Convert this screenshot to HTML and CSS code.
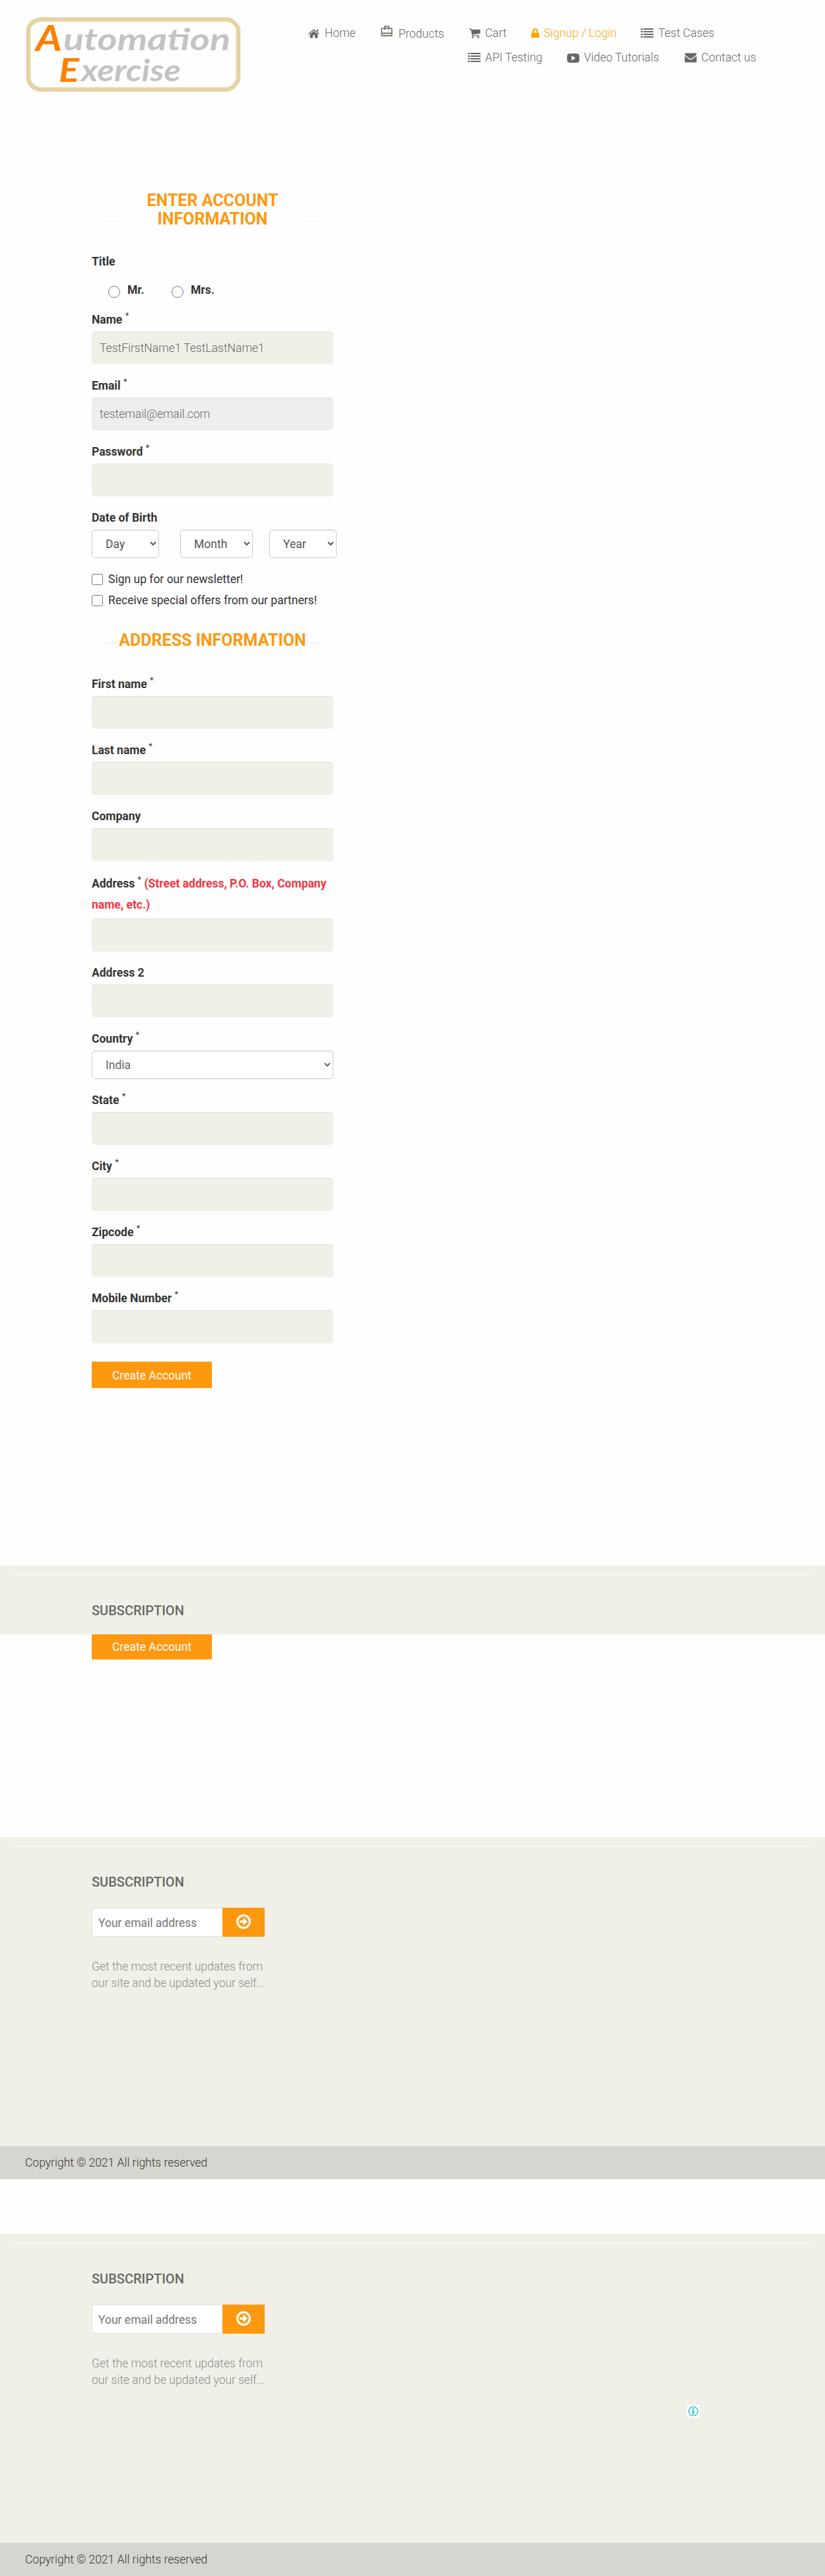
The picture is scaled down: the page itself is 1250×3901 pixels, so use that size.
FILE: index.html
```html
<!DOCTYPE html>
<html lang="en">
<head>
<meta charset="utf-8">
<title>Automation Exercise - Signup</title>
<link rel="stylesheet" href="styles.css">
</head>
<body>
<svg width="0" height="0" class="sprite">
  <symbol id="list" viewBox="0 0 19 14"><path d="M0 0h3v2H0zM4 0h15v2H4zM0 4h3v2H0zM4 4h15v2H4zM0 8h3v2H0zM4 8h15v2H4zM0 12h3v2H0zM4 12h15v2H4z"/></symbol>
  <symbol id="arrow" viewBox="0 0 24 24"><path fill-rule="evenodd" d="M12 0a12 12 0 1 0 0 24a12 12 0 0 0 0-24zm0 3.500a8.500 8.500 0 1 1 0 17a8.500 8.500 0 0 1 0-17z"/><path d="M5.800 10.200h5.600V6.900q.9-1.300 2-.2L18.400 12l-5 5.300q-1.100 1.100-2-.2v-3.300H5.800z"/></symbol>
</svg>

<header class="header">
  <svg class="logo" width="328" height="116" viewBox="0 0 328 116" role="img" aria-label="Automation Exercise">
    <path class="logo-frame" d="M22 3.500H307Q316 4 323 17V95Q316 108 307 109.500H22Q9 107 5 95V17Q9 6 22 3.500Z"/>
    <text class="logo-cap" x="16" y="51" font-size="54" textLength="40" lengthAdjust="spacingAndGlyphs">A</text>
    <text class="logo-word" x="58" y="50" font-size="45" textLength="253" lengthAdjust="spacingAndGlyphs">utomation</text>
    <text class="logo-cap" x="51" y="98" font-size="50" textLength="31" lengthAdjust="spacingAndGlyphs">E</text>
    <text class="logo-word" x="85" y="97" font-size="45" textLength="151" lengthAdjust="spacingAndGlyphs">xercise</text>
  </svg>
  <nav class="nav">
    <div class="nav-row">
      <a class="home"><svg width="17" height="14" viewBox="0 0 17 14"><path d="M8.500 0L17 7.300l-1 1L8.500 1.900L1 8.300l-1-1zM13 .7h2v4l-2-1.800zM2.600 8.100L8.500 3.200l5.900 4.900V13.500H10V9.300H7v4.200H2.600z"/></svg>Home</a>
      <a class="products"><svg width="18" height="17" viewBox="0 0 18 17"><path fill-rule="evenodd" d="M5 3V1.500Q5 0 6.300 0h5Q13 0 13 1.500V3h3q1.500 0 1.500 1.500v10q0 1.500-1.500 1.500H2Q.5 16 .5 14.500v-10Q.5 3 2 3zm1.600 0h4.800V1.500H6.600zM2 4.600v5.900h14V4.600h-3v1.700h-1.600V4.600H6.600v1.700H5V4.600zM2 12.300v2h14v-2z"/></svg>Products</a>
      <a class="cart"><svg width="17" height="15" viewBox="0 0 17 15"><path d="M0 .5h2.600q1 0 1.200 1.200H16.500v6L5 9.200l.2 1.100H15v1.300H4.500L2.400 2H0z"/><circle cx="5.200" cy="13.400" r="1.400"/><circle cx="13.700" cy="13.400" r="1.400"/></svg>Cart</a>
      <a class="signup"><svg width="12" height="15" viewBox="0 0 12 15"><path fill-rule="evenodd" d="M1.800 6.500V4.200a4.200 4.200 0 0 1 8.400 0v2.300H11q1 0 1 1v5.800q0 1-1 1H1q-1 0-1-1V7.500q0-1 1-1zM4 6.500h4V4.200a2 2 0 0 0-4 0z"/></svg>Signup / Login</a>
      <a class="cases"><svg class="list" width="19" height="14"><use href="#list"/></svg>Test Cases</a>
    </div>
    <div class="nav-row second">
      <a class="api"><svg class="list" width="19" height="14"><use href="#list"/></svg>API Testing</a>
      <a class="video"><svg width="19" height="14" viewBox="0 0 19 14"><path fill-rule="evenodd" d="M3 .3Q9.500-.2 16 .3q2.300.2 2.600 2.500.5 4.200 0 8.400-.3 2.300-2.600 2.500-6.500.5-13 0Q.7 13.500.4 11.200q-.5-4.200 0-8.400Q.7.500 3 .3zM6.900 3.200v7.600L13.200 7z"/></svg>Video Tutorials</a>
      <a class="contact"><svg width="19" height="15" viewBox="0 0 19 15"><path d="M1.500.5h16q1 0 1 1.200Q18 3.800 11.500 8.200q-2 1.400-4 0Q1 3.800.5 1.700.5.500 1.500.5zM.5 4.500Q3 7 7 9.600q2.500 1.700 5 0Q16 7 18.500 4.500v8.700q0 1.300-1.300 1.300H1.800Q.5 14.500.5 13.200z"/></svg>Contact us</a>
    </div>
  </nav>
</header>

<main class="form">
  <h2 class="title two-line">Enter Account Information</h2>
  <div class="label title-label">Title</div>
  <div class="radios">
    <label class="radio"><input type="radio" name="t">Mr.</label>
    <label class="radio"><input type="radio" name="t">Mrs.</label>
  </div>
  <div class="group"><label class="label">Name <sup>*</sup></label><input class="field" value="TestFirstName1 TestLastName1"></div>
  <div class="group"><label class="label">Email <sup>*</sup></label><input class="field off" value="testemail@email.com" disabled></div>
  <div class="group"><label class="label">Password <sup>*</sup></label><input class="field" type="password"></div>
  <div class="group"><label class="label">Date of Birth</label>
    <div class="dates">
      <select class="select"><option>Day</option></select>
      <select class="select month"><option>Month</option></select>
      <select class="select"><option>Year</option></select>
    </div>
  </div>
  <label class="check"><input type="checkbox">Sign up for our newsletter!</label>
  <label class="check"><input type="checkbox">Receive special offers from our partners!</label>
  <h2 class="title address">Address Information</h2>
  <div class="group"><label class="label">First name <sup>*</sup></label><input class="field"></div>
  <div class="group"><label class="label">Last name <sup>*</sup></label><input class="field"></div>
  <div class="group"><label class="label">Company</label><input class="field"></div>
  <div class="group"><label class="label tall">Address <sup>*</sup> <span class="hint">(Street address, P.O. Box, Company name, etc.)</span></label><input class="field"></div>
  <div class="group"><label class="label">Address 2</label><input class="field"></div>
  <div class="group"><label class="label">Country <sup>*</sup></label><select class="select wide"><option>India</option></select></div>
  <div class="group"><label class="label">State <sup>*</sup></label><input class="field"></div>
  <div class="group"><label class="label">City <sup>*</sup></label><input class="field"></div>
  <div class="group"><label class="label">Zipcode <sup>*</sup></label><input class="field"></div>
  <div class="group"><label class="label">Mobile Number <sup>*</sup></label><input class="field"></div>
  <button class="create">Create Account</button>
</main>

<section class="footer short">
  <h3 class="sub">Subscription</h3>
</section>
<div class="repeat"><button class="create cut">Create Account</button></div>

<footer>
  <section class="footer">
    <h3 class="sub">Subscription</h3>
    <form class="subscribe"><input placeholder="Your email address"><button type="button"><svg width="22" height="22"><use href="#arrow"/></svg></button></form>
    <p class="note">Get the most recent updates from<br>our site and be updated your self...</p>
  </section>
  <div class="copyright">Copyright © 2021 All rights reserved</div>
</footer>

<footer class="last">
  <section class="footer">
    <h3 class="sub">Subscription</h3>
    <form class="subscribe"><input placeholder="Your email address"><button type="button"><svg width="22" height="22"><use href="#arrow"/></svg></button></form>
    <p class="note">Get the most recent updates from<br>our site and be updated your self...</p>
    <svg class="adinfo" width="19" height="19" viewBox="0 0 19 19"><rect width="19" height="19" fill="#fff"/><circle cx="9.500" cy="9.500" r="6.900" fill="none" stroke="#1bb5d3" stroke-width="1.300"/><path fill="#1bb5d3" d="M8.300 4.800h2.400v2H8.300zM8 8h2.700v6H8.300V9H8z"/></svg>
  </section>
  <div class="copyright">Copyright © 2021 All rights reserved</div>
</footer>
</body>
</html>
```
FILE: styles.css
```css
* { box-sizing: border-box; }
body { margin: 0; background: #fefefe; font: 300 17.5px/25px Roboto, sans-serif; color: #696763; }
.sprite { display: none; }
input, select, button { font-family: inherit; font-size: 17.5px; margin: 0; }

.header { display: flex; height: 166px; margin: 0 37px 0 38px; border-bottom: 1px solid #f5f5f5; }
.logo { margin-top: 26px; flex: none; }
.logo-frame { fill: none; stroke: #e6d2a2; stroke-width: 6.500; }
.logo text { font-family: Lato, sans-serif; font-style: italic; font-weight: 700; }
.logo .logo-word { fill: #c3c3c3; }
.logo .logo-cap { fill: #ff8000; }
.nav { padding-top: 38px; margin-left: 101px; }
.nav-row { display: flex; height: 37px; white-space: nowrap; }
.nav-row.second { margin-left: 242px; }
.nav a { display: flex; align-items: center; height: 25px; gap: 7px; }
.nav svg { fill: #696763; flex: none; }
.nav .list { margin-top: -1px; }
.nav .home { gap: 8px; }
.nav .products { margin: 1px 0 0 38px; gap: 9px; }
.products svg { margin-top: -8px; }
.nav .cart { margin-left: 38px; }
.nav .signup { margin-left: 37px; color: #ffa500; }
.nav .signup svg { fill: #ffa500; }
.nav .cases, .nav .video { margin-left: 37px; }
.nav .contact { margin-left: 38px; }

.form { width: 366px; margin: 124px 0 0 139px; height: 2081px; }
.title { position: relative; margin: 0; padding: 0 40px; text-align: center; text-transform: uppercase; font-weight: 700; font-size: 25px; line-height: 28px; color: #fe980f; }
.title::before, .title::after { content: ""; position: absolute; top: 44px; width: 27px; height: 2px; background: #f5f5f5; }
.title::before { left: 18px; }
.title::after { right: 19px; }
.title.address { margin-top: 27px; height: 68px; padding: 0; white-space: nowrap; }
.title.address::before, .title.address::after { top: 17px; width: 23px; }
.label { display: block; font-weight: 700; font-size: 17.5px; line-height: 25px; margin-bottom: 5px; color: #333; }
.label sup { position: relative; top: -8px; font-size: 13px; line-height: 0; vertical-align: baseline; font-weight: 400; }
.label.tall { position: relative; line-height: 32px; margin-top: -2px; }
.hint { color: #f5333f; }
.title-label { margin: 38px 0 0; }
.radios { display: flex; height: 63px; padding: 18px 0 0 25px; }
.radio { display: flex; width: 96px; gap: 11px; font-weight: 700; color: #333; white-space: nowrap; }
.radio input { width: 18px; height: 18px; margin-top: 6px; }
.group { display: flow-root; margin-bottom: 20px; }
.field { display: block; width: 366px; height: 50px; border: 0; padding: 0 12px; border-radius: 5px; background: #f0f0e9; box-shadow: inset 0 1px 1px rgba(0,0,0,.075); color: #696763; font-weight: 300; }
.field.off { background: #eee; }
.select { width: 102px; height: 43px; padding: 7px 0 7px 16px; border: 1px solid #ccc; border-radius: 5px; background: #fff; color: #555; font-weight: 400; box-shadow: inset 0 1px 1px rgba(0,0,0,.075); }
.select.wide { display: block; width: 366px; color: #696763; }
.dates { display: flex; width: 371px; }
.dates .month { width: 110px; margin: 0 25px 0 32px; }
.check { display: flex; align-items: flex-start; gap: 8px; height: 32px; color: #333; font-weight: 400; white-space: nowrap; }
.check input { width: 17px; height: 17px; margin-top: 4px; }
.create { display: block; margin-top: 28px; width: 182px; height: 40px; padding: 2px 0 0; border: 0; background: #fe980f; color: #fff; font-weight: 400; }
.repeat { height: 307px; padding-left: 139px; }
.create.cut { height: 38px; margin: 0; padding: 0; }

.footer { position: relative; height: 468px; padding: 56px 0 0 139px; background: #f0f0e9; }
.footer::before { content: ""; position: absolute; left: 19px; right: 19px; top: 13px; height: 1px; background: #fff; }
.footer.short { height: 104px; }
.sub { margin: 0; font-size: 20px; line-height: 25px; font-weight: 500; text-transform: uppercase; color: #696763; }
.subscribe { display: flex; margin: 26px 0 0; }
.subscribe input { width: 198px; height: 44px; padding: 2px 9px 0; border: 1px solid #ddd; border-right: 0; background: #fff; font-weight: 400; }
.subscribe input::placeholder { color: #757575; }
.subscribe button { display: grid; place-items: center; width: 64px; height: 44px; padding: 0 0 2px; border: 0; background: #fe980f; }
.subscribe svg { fill: #fff; }
.note { margin: 33px 0 0; color: #8c8c88; white-space: nowrap; }
.adinfo { position: absolute; left: 1041px; top: 259px; }
.copyright { height: 50px; padding: 13px 38px 12px; background: #d6d6d0; color: #363432; }
.last { margin-top: 83px; }
```
